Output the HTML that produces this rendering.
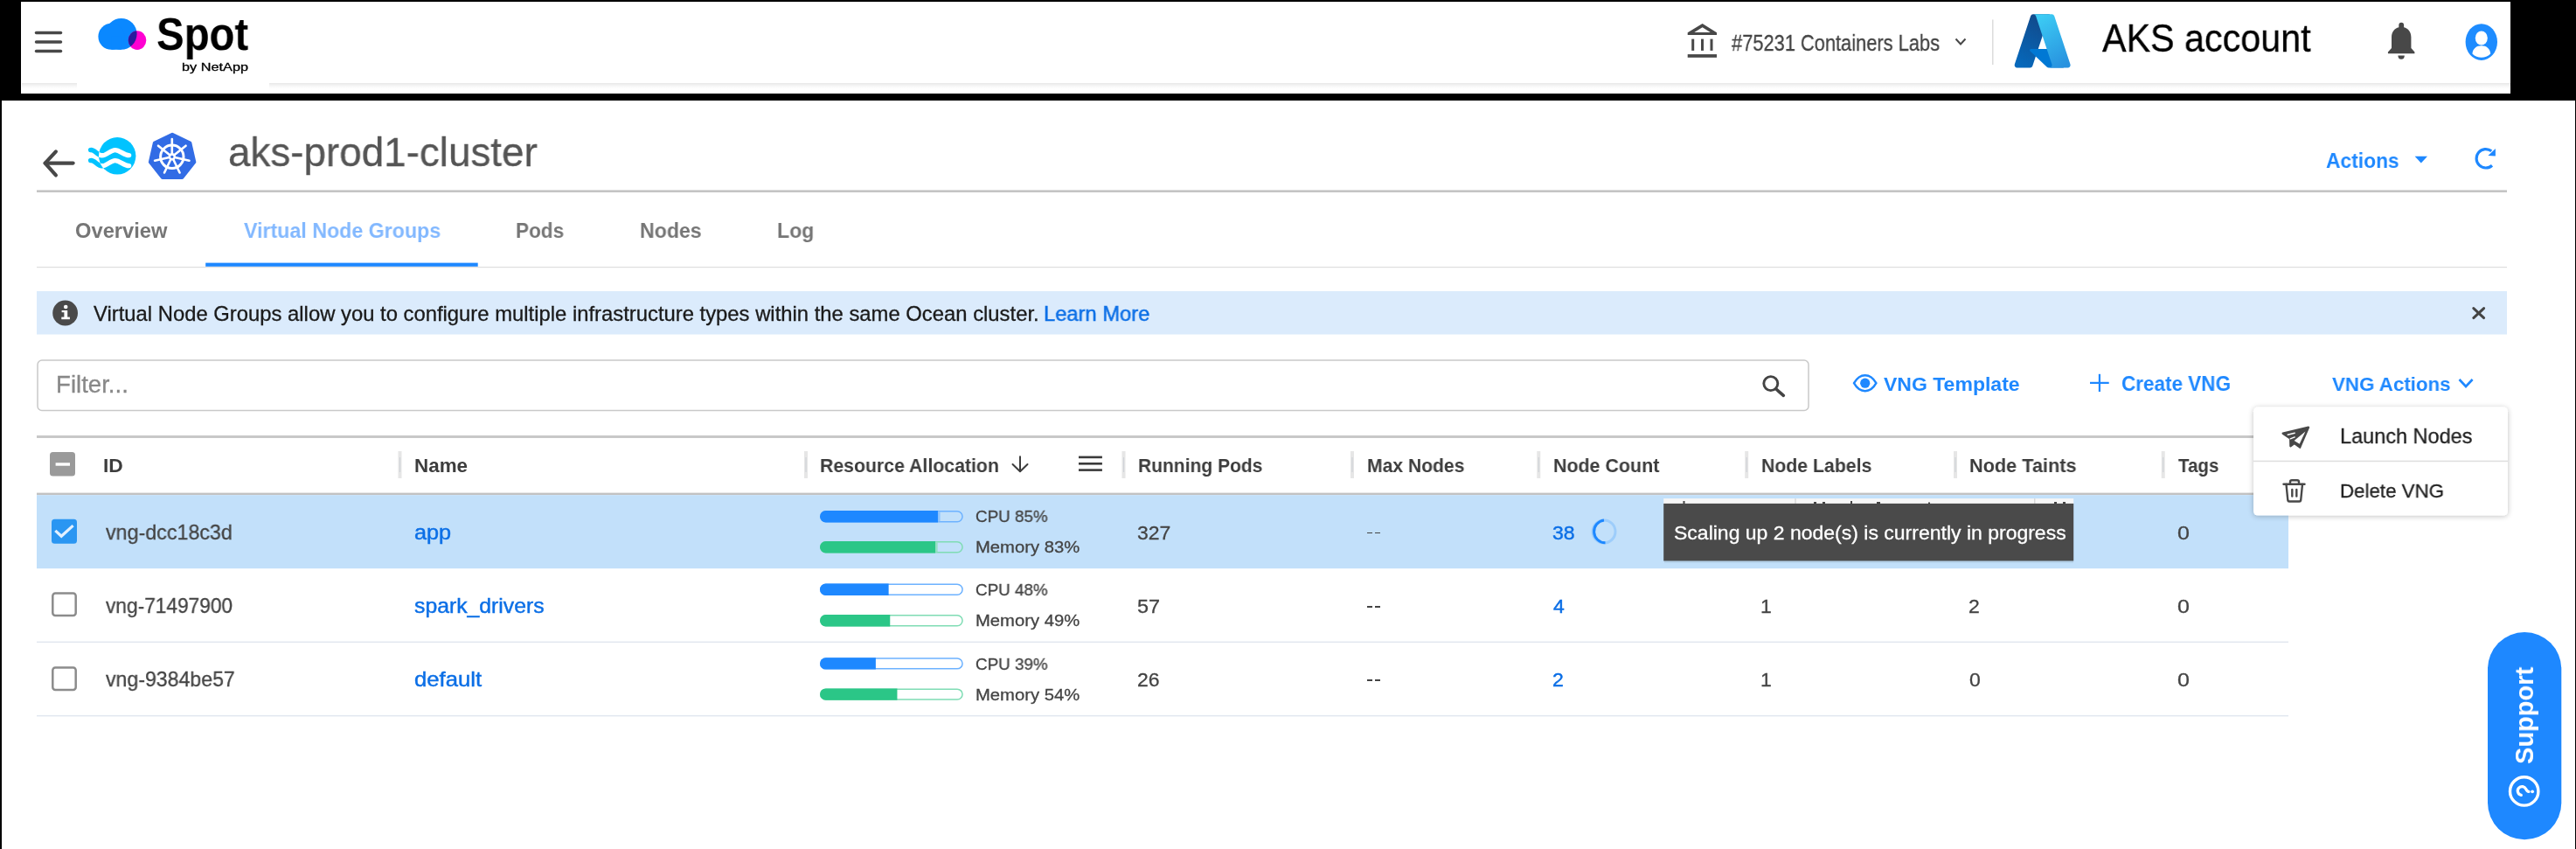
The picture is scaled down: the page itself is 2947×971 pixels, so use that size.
<!DOCTYPE html>
<html><head><meta charset="utf-8"><style>
html,body{margin:0;padding:0;width:2947px;height:971px;overflow:hidden;background:#fff}
.t{position:absolute;white-space:nowrap;font-family:"Liberation Sans", sans-serif;transform-origin:0 0;will-change:transform}
.s{position:absolute;left:0;top:0}
.bl{display:inline-block;width:0;height:0;vertical-align:baseline}
</style></head><body>
<div style="position:absolute;left:0;top:0;width:2947px;height:971px;background:#000"></div>
<div style="position:absolute;left:24px;top:2px;width:2848px;height:105px;background:#fff"></div>
<div style="position:absolute;left:2px;top:115px;width:2944px;height:856px;background:#fff"></div>
<svg class="s" width="2947" height="971" viewBox="0 0 2947 971">
<defs><linearGradient id="hs" x1="0" y1="0" x2="0" y2="1"><stop offset="0" stop-color="#e6e6e6"/><stop offset="1" stop-color="#fff" stop-opacity="0"/></linearGradient></defs>
<rect x="25" y="95" width="63" height="8" fill="url(#hs)"/>
<rect x="308" y="95" width="2564" height="8" fill="url(#hs)"/>
<g stroke="#484848" stroke-width="3.5" stroke-linecap="round">
<line x1="41.5" y1="37.6" x2="69.5" y2="37.6"/><line x1="41.5" y1="48" x2="69.5" y2="48"/><line x1="41.5" y1="58.5" x2="69.5" y2="58.5"/>
</g>
<defs><clipPath id="mag"><ellipse cx="157" cy="46.1" rx="10.3" ry="10.8"/></clipPath></defs>
<g id="cloud" fill="#0a88ff">
<circle cx="138.7" cy="38.9" r="17.9"/><circle cx="127.4" cy="41.8" r="15"/>
<rect x="127.4" y="41.8" width="11.3" height="15"/>
</g>
<ellipse cx="157" cy="46.1" rx="10.3" ry="10.8" fill="#ff00d2"/>
<g clip-path="url(#mag)" fill="#2a1a9c"><circle cx="138.7" cy="38.9" r="17.9"/></g>
<!-- bank -->
<g fill="#484848">
<path d="M1930.7,37.3 L1947.6,27.1 L1964,37.3 V40.1 H1930.7 Z M1938.3,37 L1956.7,37 L1947.6,31.2 Z" fill-rule="evenodd"/>
<rect x="1935.2" y="44.6" width="3" height="13.3"/><rect x="1946" y="44.6" width="3" height="13.3"/><rect x="1956.5" y="44.6" width="3" height="13.3"/>
<rect x="1930.7" y="62.1" width="33.3" height="3.7"/>
</g>
<polyline points="2237.5,44.5 2243,50.5 2248.5,44.5" fill="none" stroke="#484848" stroke-width="2"/>
<rect x="2279" y="22.4" width="1.5" height="51.6" fill="#dcdcdc"/>
<!-- azure -->
<defs>
<linearGradient id="az1" x1="0.6" y1="0" x2="0.2" y2="1"><stop offset="0" stop-color="#114a8b"/><stop offset="1" stop-color="#0669bc"/></linearGradient>
<linearGradient id="az3" x1="0.3" y1="0" x2="0.7" y2="1"><stop offset="0" stop-color="#3ccbf4"/><stop offset="1" stop-color="#2892df"/></linearGradient>
<linearGradient id="az2" x1="0" y1="0" x2="1" y2="1"><stop offset="0" stop-color="#000" stop-opacity=".3"/><stop offset=".1" stop-color="#000" stop-opacity=".2"/><stop offset=".3" stop-color="#000" stop-opacity=".1"/><stop offset="1" stop-color="#000" stop-opacity="0"/></linearGradient>
</defs>
<g transform="translate(2304.8,16.2) scale(0.727,0.74) translate(-4.2,-6.5)">
<path fill="url(#az1)" d="M33.338 6.544h26.038l-27.03 80.087a4.152 4.152 0 0 1-3.933 2.824H8.149a4.145 4.145 0 0 1-3.928-5.47L29.404 9.368a4.152 4.152 0 0 1 3.934-2.825z"/>
<path fill="#0078d4" d="M71.175 60.261h-41.29a1.911 1.911 0 0 0-1.305 3.309l26.532 24.764a4.171 4.171 0 0 0 2.846 1.121h23.38z"/>
<path fill="url(#az3)" d="M66.595 9.364a4.145 4.145 0 0 0-3.928-2.82H33.648a4.146 4.146 0 0 1 3.928 2.82l25.184 74.62a4.146 4.146 0 0 1-3.928 5.472h29.02a4.146 4.146 0 0 0 3.927-5.472z"/>
</g>
<!-- bell -->
<g fill="#484848">
<path d="M2744.3,31.2 V28.7 A2.9,2.9 0 0 1 2750.1,28.7 V31.2 C2755.2,32.5 2758.4,36.5 2758.4,42.5 V54.9 L2762.4,59.4 V61.3 H2731.9 V59.4 L2736,54.9 V42.5 C2736,36.5 2739.2,32.5 2744.3,31.2 Z"/>
<path d="M2743.4,63.6 H2750.8 A3.7,4.2 0 0 1 2743.4,63.6 Z"/>
</g>
<!-- user -->
<ellipse cx="2838.8" cy="48.05" rx="18.2" ry="20.85" fill="#1e8cff"/>
<ellipse cx="2838.8" cy="43.5" rx="7" ry="8.1" fill="#fff"/>
<path d="M2828.4,61.4 C2829,55.6 2833,52.3 2838.8,52.3 C2844.6,52.3 2848.6,55.6 2849.2,61.4 C2846.2,64.6 2842.6,65.7 2838.8,65.7 C2835,65.7 2831.4,64.6 2828.4,61.4 Z" fill="#fff"/>
</svg>
<div class="t" style="left:178.58px;top:13.01px;font-size:52.33px;line-height:52.33px;color:#000;font-weight:700;transform:scaleX(0.9056);letter-spacing:0">Spot</div>
<div class="t" style="left:207.94px;top:69.71px;font-size:13.52px;line-height:13.52px;color:#000;font-weight:400;transform:scaleX(1.2041);-webkit-text-stroke:0.3px #000">by NetApp</div>
<div class="t" style="left:1980.99px;top:35.90px;font-size:26.31px;line-height:26.31px;color:#444;font-weight:400;transform:scaleX(0.8306);-webkit-text-stroke:0.3px #444;">#75231 Containers Labs</div>
<div class="t" style="left:2405.00px;top:22.31px;font-size:44.48px;line-height:44.48px;color:#000;font-weight:400;transform:scaleX(0.9282);-webkit-text-stroke:0.3px #000;">AKS account</div>
<svg class="s" width="2947" height="971" viewBox="0 0 2947 971">
<g fill="none" stroke="#484848" stroke-width="4.2" stroke-linecap="round" stroke-linejoin="round">
<polyline points="63.9,173.4 51.6,186.6 63.9,200.4"/><line x1="51.6" y1="186.6" x2="83.6" y2="186.6"/>
</g>
<defs><clipPath id="oc"><circle cx="134.2" cy="178.3" r="21.2"/></clipPath>
<clipPath id="ocout"><path d="M0,0 H400 V400 H0 Z M134.2,157.1 A21.2,21.2 0 1 0 134.21,157.1 Z" clip-rule="evenodd"/></clipPath></defs>
<circle cx="134.2" cy="178.3" r="21.2" fill="#00c3ff"/>
<g fill="none" stroke-width="5.4" stroke-linecap="round">
<g stroke="#00c3ff" clip-path="url(#ocout)">
<path d="M103.6,171.6 C108.5,170.8 111,177.6 116.5,177.8 C122.5,178 126,171.6 131.6,171.6 C137.5,171.6 141.5,177.6 147.6,177.6"/>
<path d="M103.6,183.6 C108.5,182.8 111,189.6 116.5,189.8 C122.5,190 126,183.6 131.6,183.6 C137.5,183.6 141.5,189.6 147.6,189.6"/>
</g>
<g stroke="#fff" clip-path="url(#oc)">
<path d="M103.6,171.6 C108.5,170.8 111,177.6 116.5,177.8 C122.5,178 126,171.6 131.6,171.6 C137.5,171.6 141.5,177.6 147.6,177.6"/>
<path d="M103.6,183.6 C108.5,182.8 111,189.6 116.5,189.8 C122.5,190 126,183.6 131.6,183.6 C137.5,183.6 141.5,189.6 147.6,189.6"/>
</g></g>
</svg>
<svg class="s" width="2947" height="971" viewBox="0 0 2947 971">
<polygon points="197.10,153.70 217.35,163.45 222.35,185.36 208.34,202.94 185.86,202.94 171.85,185.36 176.85,163.45" fill="#326ce5" stroke="#326ce5" stroke-width="4" stroke-linejoin="round"/>
<circle cx="196.8" cy="179.3" r="13.2" fill="none" stroke="#fff" stroke-width="3"/>
<g stroke="#fff" stroke-width="2.6" stroke-linecap="round"><line x1="196.8" y1="179.3" x2="196.80" y2="159.10"/><line x1="196.8" y1="179.3" x2="212.59" y2="166.71"/><line x1="196.8" y1="179.3" x2="216.49" y2="183.79"/><line x1="196.8" y1="179.3" x2="205.56" y2="197.50"/><line x1="196.8" y1="179.3" x2="188.04" y2="197.50"/><line x1="196.8" y1="179.3" x2="177.11" y2="183.79"/><line x1="196.8" y1="179.3" x2="181.01" y2="166.71"/></g>
<circle cx="196.8" cy="179.3" r="4.2" fill="#fff"/>
<circle cx="196.8" cy="179.3" r="1.6" fill="#326ce5"/>
<rect x="42" y="217.4" width="2826" height="2.6" fill="#c4c4c4"/>
<polygon points="2762.6,178.8 2777,178.8 2769.8,186.4" fill="#1e88ff"/>
<g fill="none" stroke="#1e88ff" stroke-width="3.2">
<path d="M2850.3,172.8 A10.7,10.7 0 1 0 2851,189.2"/>
</g>
<polygon points="2846.4,177.9 2854.9,169.9 2854.9,178.6" fill="#1e88ff"/>
<rect x="42" y="305" width="2826" height="1.2" fill="#dedede"/>
<rect x="235.2" y="300.6" width="311.5" height="4.2" fill="#1e88ff"/>
</svg>
<div class="t" style="left:260.67px;top:151.11px;font-size:46.34px;line-height:46.34px;color:#555;font-weight:400;transform:scaleX(0.9884);-webkit-text-stroke:0.3px #555;">aks-prod1-cluster</div>
<div class="t" style="left:2661.23px;top:173.01px;font-size:23.26px;line-height:23.26px;color:#1e88ff;font-weight:700;transform:scaleX(0.9806);">Actions</div>
<div class="t" style="left:85.85px;top:253.01px;font-size:23.55px;line-height:23.55px;color:#767676;font-weight:700;transform:scaleX(1.0073);">Overview</div>
<div class="t" style="left:279.08px;top:253.01px;font-size:23.55px;line-height:23.55px;color:#82b8ff;font-weight:700;transform:scaleX(0.9852);">Virtual Node Groups</div>
<div class="t" style="left:590.33px;top:253.01px;font-size:23.55px;line-height:23.55px;color:#767676;font-weight:700;transform:scaleX(0.9583);">Pods</div>
<div class="t" style="left:732.10px;top:253.01px;font-size:23.55px;line-height:23.55px;color:#767676;font-weight:700;transform:scaleX(0.9818);">Nodes</div>
<div class="t" style="left:888.90px;top:253.01px;font-size:23.55px;line-height:23.55px;color:#767676;font-weight:700;transform:scaleX(0.9793);">Log</div>
<svg class="s" width="2947" height="971" viewBox="0 0 2947 971">
<rect x="42" y="333" width="2826" height="49.5" fill="#dbebfc"/>
<circle cx="74.6" cy="358" r="14.4" fill="#4a4a4a"/>
<g fill="#fff"><circle cx="75.2" cy="351" r="2.3"/><rect x="73.4" y="355" width="3.8" height="9.5"/><rect x="70.6" y="355" width="5" height="2.2"/><rect x="70.3" y="362.6" width="9.6" height="2.6"/></g>
<g stroke="#444" stroke-width="3" stroke-linecap="round"><line x1="2829.8" y1="352.6" x2="2841.6" y2="363.6"/><line x1="2841.6" y1="352.6" x2="2829.8" y2="363.6"/></g>
<rect x="43" y="412" width="2026" height="57.5" rx="5" fill="#fff" stroke="#c9c9c9" stroke-width="1.5"/>
<circle cx="2025.8" cy="438.6" r="8" fill="none" stroke="#444" stroke-width="2.9"/>
<line x1="2032" y1="445" x2="2040.3" y2="452.3" stroke="#444" stroke-width="3.6" stroke-linecap="round"/>
<path d="M2121,438.2 C2125,431 2129,429.2 2133.7,429.2 C2138.4,429.2 2142.4,431 2146.4,438.2 C2142.4,445.4 2138.4,447.2 2133.7,447.2 C2129,447.2 2125,445.4 2121,438.2 Z" fill="none" stroke="#1e88ff" stroke-width="2.4"/>
<circle cx="2133.7" cy="438.2" r="5.6" fill="#1e88ff"/>
<g stroke="#1e88ff" stroke-width="2.2"><line x1="2391" y1="437.9" x2="2412.7" y2="437.9"/><line x1="2401.9" y1="427.8" x2="2401.9" y2="448"/></g>
<polyline points="2813.5,434 2821,442 2828.6,434" fill="none" stroke="#1e88ff" stroke-width="2.6"/>
</svg>
<div class="t" style="left:107.48px;top:347.20px;font-size:23.84px;line-height:23.84px;color:#1a1a1a;font-weight:400;transform:scaleX(1.0000);-webkit-text-stroke:0.3px #1a1a1a;">Virtual Node Groups allow you to configure multiple infrastructure types within the same Ocean cluster.</div>
<div class="t" style="left:1194.10px;top:347.21px;font-size:24.13px;line-height:24.13px;color:#0c6fe6;font-weight:400;transform:scaleX(0.9834);-webkit-text-stroke:0.5px #0c6fe6">Learn More</div>
<div class="t" style="left:64.09px;top:425.81px;font-size:27.62px;line-height:27.62px;color:#888;font-weight:400;transform:scaleX(1.0006);-webkit-text-stroke:0.3px #888;">Filter...</div>
<div class="t" style="left:2155.08px;top:427.80px;font-size:22.67px;line-height:22.67px;color:#1e88ff;font-weight:700;transform:scaleX(1.0159);">VNG Template</div>
<div class="t" style="left:2427.30px;top:428.01px;font-size:23.26px;line-height:23.26px;color:#1e88ff;font-weight:700;transform:scaleX(0.9672);">Create VNG</div>
<div class="t" style="left:2667.89px;top:428.01px;font-size:22.97px;line-height:22.97px;color:#1e88ff;font-weight:700;transform:scaleX(0.9713);">VNG Actions</div>
<svg class="s" width="2947" height="971" viewBox="0 0 2947 971">
<rect x="42" y="498" width="2826" height="3" fill="#c8c8c8"/>
<rect x="42" y="563.6" width="2576" height="2.6" fill="#c2c2c2"/>
<rect x="42" y="566.2" width="2576" height="84" fill="#c2e0fa"/>
<rect x="42" y="733.6" width="2576" height="1.5" fill="#e1e7ef"/>
<rect x="42" y="817.9" width="2576" height="1.5" fill="#e1e7ef"/>
<rect x="455.5" y="516" width="4" height="31" fill="#e6e6e6"/><rect x="456.9" y="523" width="1.2" height="17" fill="#d0d3d8"/><rect x="920.0" y="516" width="4" height="31" fill="#e6e6e6"/><rect x="921.4" y="523" width="1.2" height="17" fill="#d0d3d8"/><rect x="1283.5" y="516" width="4" height="31" fill="#e6e6e6"/><rect x="1284.9" y="523" width="1.2" height="17" fill="#d0d3d8"/><rect x="1545.0" y="516" width="4" height="31" fill="#e6e6e6"/><rect x="1546.4" y="523" width="1.2" height="17" fill="#d0d3d8"/><rect x="1758.3" y="516" width="4" height="31" fill="#e6e6e6"/><rect x="1759.7" y="523" width="1.2" height="17" fill="#d0d3d8"/><rect x="1996.2" y="516" width="4" height="31" fill="#e6e6e6"/><rect x="1997.6" y="523" width="1.2" height="17" fill="#d0d3d8"/><rect x="2235.0" y="516" width="4" height="31" fill="#e6e6e6"/><rect x="2236.4" y="523" width="1.2" height="17" fill="#d0d3d8"/><rect x="2472.7" y="516" width="4" height="31" fill="#e6e6e6"/><rect x="2474.1" y="523" width="1.2" height="17" fill="#d0d3d8"/>
<rect x="57" y="517" width="29" height="27.5" rx="3.5" fill="#9a9a9a"/>
<rect x="63.6" y="529.3" width="16.4" height="3.4" fill="#fff"/>
<g fill="none" stroke="#3d3d3d" stroke-width="2" stroke-linecap="round" stroke-linejoin="round">
<line x1="1167" y1="522.3" x2="1167" y2="539"/><polyline points="1158.5,531 1167,539.3 1175.5,531"/></g>
<g stroke="#3a3a3a" stroke-width="2.6"><line x1="1234" y1="522.9" x2="1260.9" y2="522.9"/><line x1="1234" y1="530.3" x2="1260.9" y2="530.3"/><line x1="1234" y1="537.6" x2="1260.9" y2="537.6"/></g>
<rect x="59" y="593.7" width="29" height="28.1" rx="3.5" fill="#2a96f2"/>
<polyline points="63.3,606.9 70.2,613.2 83.6,601.1" fill="none" stroke="#e2f0ff" stroke-width="3.3"/>
<rect x="60.3" y="678.5" width="26.4" height="25.6" rx="3" fill="#fff" stroke="#8c8c8c" stroke-width="2.5"/>
<rect x="60.3" y="763.5" width="26.4" height="25.6" rx="3" fill="#fff" stroke="#8c8c8c" stroke-width="2.5"/>
<rect x="938.75" y="584.85" width="162.3" height="11.9" rx="5.95" fill="none" stroke="#6db2ff" stroke-width="1.5"/><path d="M944.7,584.1 H1072.9712 V597.5 H944.7 A6.7,6.7 0 0 1 944.7,584.1 Z" fill="#1e88ff"/><rect x="1072.97" y="585.3000000000001" width="2.6" height="11.0" fill="#8ec4fd"/><rect x="938.75" y="619.85" width="162.3" height="11.9" rx="5.95" fill="none" stroke="#7fdcb4" stroke-width="1.5"/><path d="M944.7,619.1 H1070.0228 V632.5 H944.7 A6.7,6.7 0 0 1 944.7,619.1 Z" fill="#2bc687"/><rect x="1070.02" y="620.3000000000001" width="2.6" height="11.0" fill="#93dfc2"/><rect x="938.75" y="668.35" width="162.3" height="11.9" rx="5.95" fill="#fff" stroke="#6db2ff" stroke-width="1.5"/><path d="M944.7,667.6 H1016.624 V681.0 H944.7 A6.7,6.7 0 0 1 944.7,667.6 Z" fill="#1e88ff"/><rect x="938.75" y="703.75" width="162.3" height="11.9" rx="5.95" fill="#fff" stroke="#7fdcb4" stroke-width="1.5"/><path d="M944.7,703 H1018.262 V716.4 H944.7 A6.7,6.7 0 0 1 944.7,703 Z" fill="#2bc687"/><rect x="938.75" y="752.95" width="162.3" height="11.9" rx="5.95" fill="#fff" stroke="#6db2ff" stroke-width="1.5"/><path d="M944.7,752.2 H1001.8820000000001 V765.6 H944.7 A6.7,6.7 0 0 1 944.7,752.2 Z" fill="#1e88ff"/><rect x="938.75" y="788.15" width="162.3" height="11.9" rx="5.95" fill="#fff" stroke="#7fdcb4" stroke-width="1.5"/><path d="M944.7,787.4 H1026.452 V800.8 H944.7 A6.7,6.7 0 0 1 944.7,787.4 Z" fill="#2bc687"/>
<circle cx="1835" cy="607.9" r="13" fill="none" stroke="#9dcdfb" stroke-width="3"/>
<path d="M1835,594.9 A13,13 0 0 0 1836.5,620.8" fill="none" stroke="#1e88ff" stroke-width="3"/>
</svg>
<div class="t" style="left:118.22px;top:522.01px;font-size:21.80px;line-height:21.80px;color:#3d3d3d;font-weight:700;transform:scaleX(1.0455);">ID</div>
<div class="t" style="left:473.84px;top:522.01px;font-size:21.80px;line-height:21.80px;color:#3d3d3d;font-weight:700;transform:scaleX(1.0274);">Name</div>
<div class="t" style="left:937.62px;top:522.01px;font-size:21.80px;line-height:21.80px;color:#3d3d3d;font-weight:700;transform:scaleX(0.9757);">Resource Allocation</div>
<div class="t" style="left:1301.63px;top:522.01px;font-size:21.80px;line-height:21.80px;color:#3d3d3d;font-weight:700;transform:scaleX(0.9641);">Running Pods</div>
<div class="t" style="left:1563.93px;top:522.01px;font-size:21.80px;line-height:21.80px;color:#3d3d3d;font-weight:700;transform:scaleX(0.9679);">Max Nodes</div>
<div class="t" style="left:1776.61px;top:522.01px;font-size:21.80px;line-height:21.80px;color:#3d3d3d;font-weight:700;transform:scaleX(0.9822);">Node Count</div>
<div class="t" style="left:2014.92px;top:522.01px;font-size:21.80px;line-height:21.80px;color:#3d3d3d;font-weight:700;transform:scaleX(0.9747);">Node Labels</div>
<div class="t" style="left:2252.69px;top:522.01px;font-size:21.80px;line-height:21.80px;color:#3d3d3d;font-weight:700;transform:scaleX(0.9952);">Node Taints</div>
<div class="t" style="left:2492.20px;top:522.01px;font-size:21.80px;line-height:21.80px;color:#3d3d3d;font-weight:700;transform:scaleX(0.9402);">Tags</div>
<div class="t" style="left:120.88px;top:596.51px;font-size:24.14px;line-height:24.14px;color:#444;font-weight:400;transform:scaleX(0.9645);-webkit-text-stroke:0.3px #444;">vng-dcc18c3d</div>
<div class="t" style="left:473.69px;top:596.51px;font-size:24.14px;line-height:24.14px;color:#0c6fe6;font-weight:400;transform:scaleX(1.0455);-webkit-text-stroke:0.45px #0c6fe6">app</div>
<div class="t" style="left:1116.26px;top:582.01px;font-size:18.90px;line-height:18.90px;color:#444;font-weight:400;transform:scaleX(0.9945);-webkit-text-stroke:0.3px #444;">CPU 85%</div>
<div class="t" style="left:1115.58px;top:617.01px;font-size:18.90px;line-height:18.90px;color:#444;font-weight:400;transform:scaleX(1.0704);-webkit-text-stroke:0.3px #444;">Memory 83%</div>
<div class="t" style="left:1301.38px;top:597.51px;font-size:22.97px;line-height:22.97px;color:#444;font-weight:400;transform:scaleX(1.0008);-webkit-text-stroke:0.3px #444;">327</div>
<div style="position:absolute;left:1564.3px;top:608.5px;width:5.5px;height:1.8px;background:#444"></div><div style="position:absolute;left:1573.3px;top:608.5px;width:5.5px;height:1.8px;background:#444"></div>
<div class="t" style="left:1776.08px;top:597.51px;font-size:22.97px;line-height:22.97px;color:#0c6fe6;font-weight:400;transform:scaleX(1.0000);-webkit-text-stroke:0.45px #0c6fe6">38</div>
<div class="t" style="left:2490.50px;top:597.51px;font-size:22.97px;line-height:22.97px;color:#444;font-weight:400;transform:scaleX(1.0886);-webkit-text-stroke:0.3px #444;">0</div>
<div class="t" style="left:120.89px;top:681.01px;font-size:24.14px;line-height:24.14px;color:#444;font-weight:400;transform:scaleX(0.9407);-webkit-text-stroke:0.3px #444;">vng-71497900</div>
<div class="t" style="left:473.96px;top:681.01px;font-size:24.14px;line-height:24.14px;color:#0c6fe6;font-weight:400;transform:scaleX(1.0261);-webkit-text-stroke:0.45px #0c6fe6">spark_drivers</div>
<div class="t" style="left:1116.26px;top:666.40px;font-size:18.90px;line-height:18.90px;color:#444;font-weight:400;transform:scaleX(0.9945);-webkit-text-stroke:0.3px #444;">CPU 48%</div>
<div class="t" style="left:1115.58px;top:701.40px;font-size:18.90px;line-height:18.90px;color:#444;font-weight:400;transform:scaleX(1.0704);-webkit-text-stroke:0.3px #444;">Memory 49%</div>
<div class="t" style="left:1301.36px;top:682.01px;font-size:22.97px;line-height:22.97px;color:#444;font-weight:400;transform:scaleX(1.0203);-webkit-text-stroke:0.3px #444;">57</div>
<div style="position:absolute;left:1564.3px;top:693.0px;width:5.5px;height:1.8px;background:#444"></div><div style="position:absolute;left:1573.3px;top:693.0px;width:5.5px;height:1.8px;background:#444"></div>
<div class="t" style="left:1776.54px;top:682.01px;font-size:22.97px;line-height:22.97px;color:#0c6fe6;font-weight:400;transform:scaleX(1.0000);-webkit-text-stroke:0.45px #0c6fe6">4</div>
<div class="t" style="left:2013.88px;top:682.01px;font-size:22.97px;line-height:22.97px;color:#444;font-weight:400;transform:scaleX(1.0000);-webkit-text-stroke:0.3px #444;">1</div>
<div class="t" style="left:2252.45px;top:682.01px;font-size:22.97px;line-height:22.97px;color:#444;font-weight:400;transform:scaleX(1.0000);-webkit-text-stroke:0.3px #444;">2</div>
<div class="t" style="left:2490.50px;top:682.01px;font-size:22.97px;line-height:22.97px;color:#444;font-weight:400;transform:scaleX(1.0886);-webkit-text-stroke:0.3px #444;">0</div>
<div class="t" style="left:120.88px;top:765.11px;font-size:24.14px;line-height:24.14px;color:#444;font-weight:400;transform:scaleX(0.9580);-webkit-text-stroke:0.3px #444;">vng-9384be57</div>
<div class="t" style="left:473.67px;top:765.11px;font-size:24.14px;line-height:24.14px;color:#0c6fe6;font-weight:400;transform:scaleX(1.0641);-webkit-text-stroke:0.45px #0c6fe6">default</div>
<div class="t" style="left:1116.26px;top:750.60px;font-size:18.90px;line-height:18.90px;color:#444;font-weight:400;transform:scaleX(0.9945);-webkit-text-stroke:0.3px #444;">CPU 39%</div>
<div class="t" style="left:1115.58px;top:785.60px;font-size:18.90px;line-height:18.90px;color:#444;font-weight:400;transform:scaleX(1.0704);-webkit-text-stroke:0.3px #444;">Memory 54%</div>
<div class="t" style="left:1301.15px;top:766.10px;font-size:22.97px;line-height:22.97px;color:#444;font-weight:400;transform:scaleX(1.0000);-webkit-text-stroke:0.3px #444;">26</div>
<div style="position:absolute;left:1564.3px;top:777.1px;width:5.5px;height:1.8px;background:#444"></div><div style="position:absolute;left:1573.3px;top:777.1px;width:5.5px;height:1.8px;background:#444"></div>
<div class="t" style="left:1775.85px;top:766.10px;font-size:22.97px;line-height:22.97px;color:#0c6fe6;font-weight:400;transform:scaleX(1.0000);-webkit-text-stroke:0.45px #0c6fe6">2</div>
<div class="t" style="left:2013.88px;top:766.10px;font-size:22.97px;line-height:22.97px;color:#444;font-weight:400;transform:scaleX(1.0000);-webkit-text-stroke:0.3px #444;">1</div>
<div class="t" style="left:2252.68px;top:766.10px;font-size:22.97px;line-height:22.97px;color:#444;font-weight:400;transform:scaleX(1.0000);-webkit-text-stroke:0.3px #444;">0</div>
<div class="t" style="left:2490.50px;top:766.10px;font-size:22.97px;line-height:22.97px;color:#444;font-weight:400;transform:scaleX(1.0886);-webkit-text-stroke:0.3px #444;">0</div>
<svg class="s" width="2947" height="971" viewBox="0 0 2947 971">
<rect x="1903.2" y="570.1" width="469" height="6" fill="#f6f6f6"/>
<rect x="2053.3" y="570.1" width="1.4" height="6" fill="#d8d8d8"/><rect x="2327" y="570.1" width="1.4" height="6" fill="#d8d8d8"/>
<g fill="#444"><rect x="1925.5" y="573" width="2" height="3"/><rect x="2075" y="574" width="3" height="2"/><rect x="2085" y="574" width="3" height="2"/><rect x="2117" y="573" width="2" height="3"/><rect x="2147" y="574" width="4" height="2"/><rect x="2206" y="574.5" width="2" height="1.5"/><rect x="2350" y="574" width="3" height="2"/><rect x="2360" y="574" width="3" height="2"/></g>
<rect x="1904" y="641.5" width="468" height="2.2" fill="#000" fill-opacity="0.07"/>
<rect x="1903.2" y="575.9" width="469" height="65.6" fill="#4a4a4a"/>
<defs><filter id="sh" x="-10%" y="-20%" width="120%" height="140%"><feGaussianBlur in="SourceAlpha" stdDeviation="3"/><feOffset dy="1"/><feComponentTransfer><feFuncA type="linear" slope="0.25"/></feComponentTransfer><feMerge><feMergeNode/><feMergeNode in="SourceGraphic"/></feMerge></filter></defs>
<rect x="2578" y="465.6" width="291" height="124" rx="5" fill="#fff" filter="url(#sh)"/>
<rect x="2578" y="526.7" width="291" height="1.5" fill="#dedede"/>
<path d="M2641,488.7 L2611.7,495.7 L2620.2,501.6 L2620.4,510.3 L2624.8,507 L2631.1,511.7 Z" fill="#484848" stroke="#484848" stroke-width="2.3" stroke-linejoin="round"/>
<path d="M2637.4,493.4 L2624.6,504 L2630.7,507.8 Z" fill="#fff"/>
<g stroke="#fff" stroke-width="1.4" stroke-linecap="round"><line x1="2617.2" y1="497.2" x2="2625.2" y2="495.2"/><line x1="2620.2" y1="501.8" x2="2625.2" y2="499.9"/></g>
<g fill="none" stroke="#484848" stroke-width="2.4" stroke-linecap="round" stroke-linejoin="round">
<line x1="2612.5" y1="553.8" x2="2636.5" y2="553.8"/>
<path d="M2620,553.5 V551 Q2620,549.2 2622,549.2 H2628 Q2630,549.2 2630,551 V553.5"/>
<path d="M2615.5,554 L2617.3,572 Q2617.5,573.5 2619,573.5 H2630.5 Q2632,573.5 2632.2,572 L2634,554"/>
<line x1="2622.3" y1="560" x2="2622.3" y2="567.5"/><line x1="2627.3" y1="560" x2="2627.3" y2="567.5"/>
</g>
<rect x="2846" y="723" width="84.3" height="237.3" rx="42.15" fill="#1e88ff"/>
<circle cx="2887.7" cy="904.9" r="16.2" fill="none" stroke="#fff" stroke-width="3.4"/>
<path d="M2884.3,909.4 C2880.2,908.6 2879.2,903.6 2881.6,901.1 C2884.4,898.4 2888.2,899.6 2889.6,902.2 C2890.6,904 2891.4,905.2 2892.9,905.3" fill="none" stroke="#fff" stroke-width="3.3" stroke-linecap="round"/>
<circle cx="2897.1" cy="905.3" r="1.9" fill="#fff"/>
</svg>
<div class="t" style="left:1915.16px;top:598.50px;font-size:22.38px;line-height:22.38px;color:#fff;font-weight:400;transform:scaleX(1.0278);-webkit-text-stroke:0.3px #fff;">Scaling up 2 node(s) is currently in progress</div>
<div class="t" style="left:2676.52px;top:487.00px;font-size:24.13px;line-height:24.13px;color:#222;font-weight:400;transform:scaleX(0.9735);-webkit-text-stroke:0.3px #222;">Launch Nodes</div>
<div class="t" style="left:2676.61px;top:549.60px;font-size:22.67px;line-height:22.67px;color:#222;font-weight:400;transform:scaleX(0.9841);-webkit-text-stroke:0.3px #222;">Delete VNG</div>
<div style="position:absolute;left:2898.5px;top:872.6px;width:0;height:0;transform:rotate(-90deg);transform-origin:0 0"><div class="t" style="left:-0.87px;top:-25.59px;font-size:30.23px;line-height:30.23px;color:#fff;font-weight:700;transform:scaleX(0.9600);">Support</div></div>
</body></html>
